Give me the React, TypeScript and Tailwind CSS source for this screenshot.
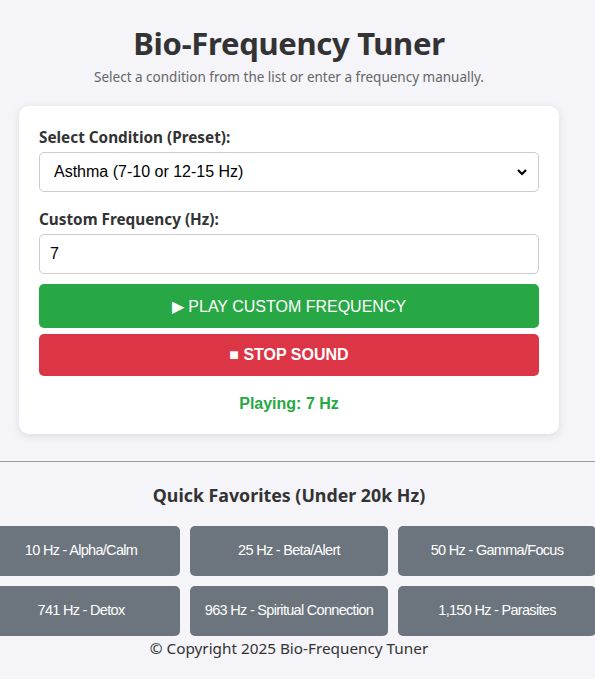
import React from "react";

const favs = [
  "10 Hz - Alpha/Calm",
  "25 Hz - Beta/Alert",
  "50 Hz - Gamma/Focus",
  "741 Hz - Detox",
  "963 Hz - Spiritual Connection",
  "1,150 Hz - Parasites",
];

export default function App() {
  const sans = { fontFamily: '"Noto Sans", "Open Sans", sans-serif' };
  const arial = { fontFamily: '"Liberation Sans", Arial, sans-serif' };
  return (
    <div className="min-h-[679px] w-[595px] overflow-hidden bg-[#f4f4f9] text-[#333]" style={sans}>
      <div className="w-[578px] flex flex-col items-center">
        <h1 className="mt-[23px] text-[31px] leading-[40px] font-bold text-[#333] tracking-[-0.3px]">Bio-Frequency Tuner</h1>
        <p className="mt-[4px] text-[13.5px] leading-[20px] text-[#666]">Select a condition from the list or enter a frequency manually.</p>
        <div className="mt-[19px] w-[540px] rounded-[10px] bg-white px-5 pt-[20px] pb-[19px] shadow-[0_2px_10px_rgba(0,0,0,0.1)]">
          <label className="block text-[15.3px] leading-[22px] font-bold text-[#333]">Select Condition (Preset):</label>
          <div className="mt-[4px] flex h-[40px] items-center justify-between rounded-[5px] border border-[#ccc] bg-white pl-[14px] pr-[10px]">
            <span className="text-[16px] text-black" style={arial}>Asthma (7-10 or 12-15 Hz)</span>
            <svg width="12" height="12" viewBox="0 0 12 12"><path d="M2 4 L6 8 L10 4" fill="none" stroke="#000" strokeWidth="2.2" /></svg>
          </div>
          <label className="mt-[16px] block text-[15.3px] leading-[22px] font-bold text-[#333]">Custom Frequency (Hz):</label>
          <div className="mt-[4px] flex h-[40px] items-center rounded-[5px] border border-[#ccc] bg-white pl-[10px]">
            <span className="text-[16px] text-black" style={arial}>7</span>
          </div>
          <div className="mt-[10px] flex h-[44px] items-center justify-center rounded-[5px] bg-[#28a745] pt-[2px] text-[16px] text-white" style={arial}>
            ▶ PLAY CUSTOM FREQUENCY
          </div>
          <div className="mt-[6px] flex h-[42px] items-center justify-center rounded-[5px] bg-[#dc3545] text-[16px] font-bold text-white" style={arial}>
            ■ STOP SOUND
          </div>
          <div className="mt-[17px] text-center text-[16px] leading-[22px] font-bold text-[#28a745]" style={arial}>
            Playing: 7 Hz
          </div>
        </div>
      </div>
      <div className="mt-[27px] h-px w-full bg-[#9a9a9a]" />
      <div className="w-[578px] flex flex-col items-center">
        <h2 className="mt-[21px] text-[17.8px] leading-[24px] font-bold text-[#333]">Quick Favorites (Under 20k Hz)</h2>
        <div className="mt-[19px] flex justify-center">
          <div className="grid w-[614px] shrink-0 grid-cols-3 gap-[10px]">
            {favs.map((f) => (
              <div key={f} className="flex h-[50px] items-center justify-center rounded-[5px] bg-[#6c757d] text-[14.5px] tracking-[-0.7px] text-white" style={arial}>
                {f}
              </div>
            ))}
          </div>
        </div>
        <p className="mt-[1px] text-[15.3px] leading-[22px] text-[#333]">© Copyright 2025 Bio-Frequency Tuner</p>
      </div>
    </div>
  );
}
